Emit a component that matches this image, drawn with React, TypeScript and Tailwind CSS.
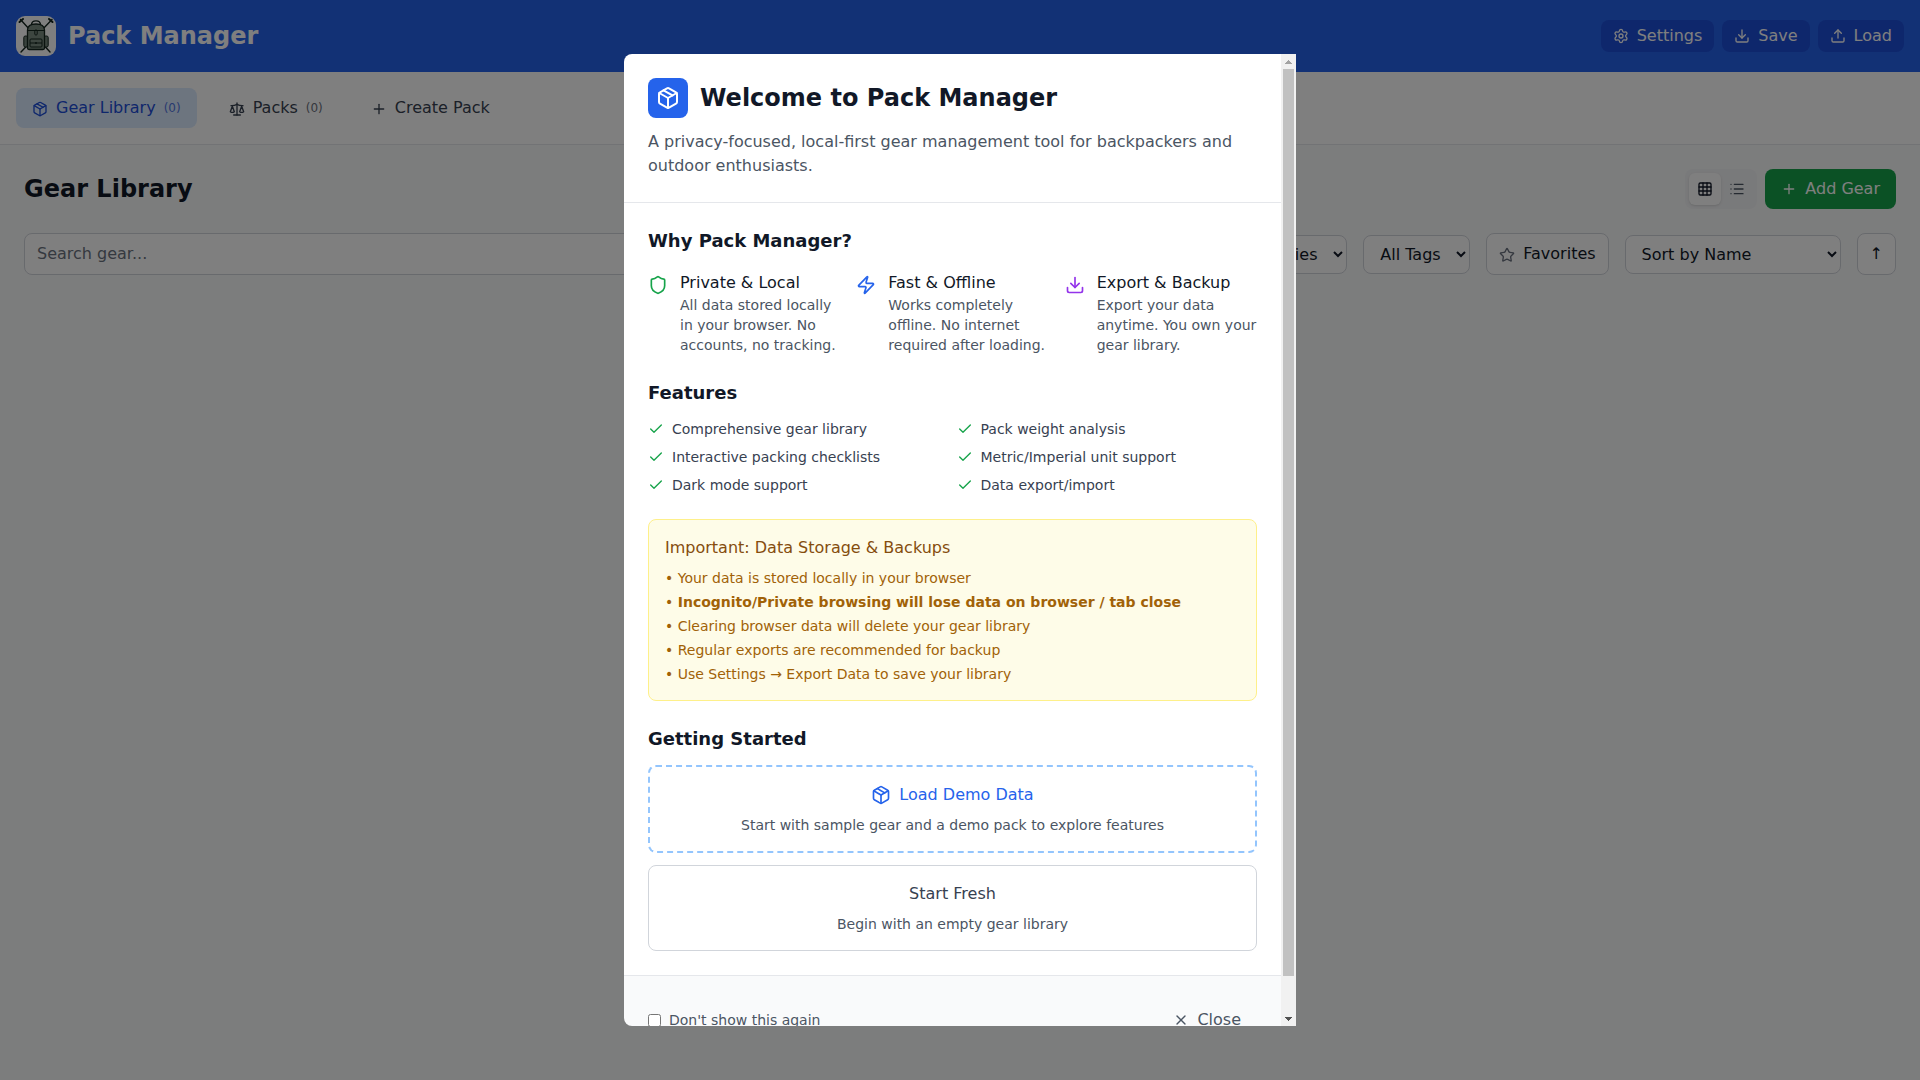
import React from 'react';
import {
  Check,
  Download,
  Grid3x3,
  List,
  Package,
  Plus,
  Scale,
  Settings,
  Shield,
  Star,
  Upload,
  X,
  Zap,
} from 'lucide-react';

const PackLogo = () => (
  <svg viewBox="0 0 40 40" className="h-10 w-10" fill="none">
    <rect width="40" height="40" rx="9" fill="#ffffff" />
    <g stroke="#14261f" strokeWidth="1.4" strokeLinecap="round">
      <path d="M4.5 3.5 34 36" />
      <path d="M36 3.5 5 36" />
      <path d="M3.5 6 7 3M33 3l3.5 3" strokeWidth="2" />
    </g>
    <path d="M15.5 9c0-5.5 9-5.5 9 0" stroke="#14261f" strokeWidth="1.4" />
    <rect x="7.8" y="20" width="4" height="11" rx="1.5" fill="#72857a" stroke="#14261f" />
    <rect x="28.2" y="20" width="4" height="11" rx="1.5" fill="#72857a" stroke="#14261f" />
    <path d="M11.5 14c0-4 3-6 8.500-6s8.500 2 8.500 6v18c0 1-.5 1.500-1.500 1.500H13c-1 0-1.500-.5-1.500-1.500z" fill="#7a8c80" stroke="#14261f" strokeWidth="1.3" />
    <path d="M11.500 14.500h17" stroke="#14261f" />
    <rect x="14" y="23" width="12" height="8" rx="1" stroke="#14261f" />
    <path d="M14 27h12" stroke="#14261f" />
    <circle cx="20" cy="27" r="1" fill="#14261f" />
    <rect x="18.800" y="14" width="2.400" height="5" rx="1" stroke="#14261f" />
  </svg>
);

const headerButtons = [
  { label: 'Settings', Icon: Settings },
  { label: 'Save', Icon: Download },
  { label: 'Load', Icon: Upload },
];

const reasons = [
  {
    title: 'Private & Local',
    text: 'All data stored locally in your browser. No accounts, no tracking.',
    Icon: Shield,
    color: 'text-[#16a34a]',
  },
  {
    title: 'Fast & Offline',
    text: 'Works completely offline. No internet required after loading.',
    Icon: Zap,
    color: 'text-[#2563eb]',
  },
  {
    title: 'Export & Backup',
    text: 'Export your data anytime. You own your gear library.',
    Icon: Download,
    color: 'text-[#9333ea]',
  },
];

const features = [
  'Comprehensive gear library',
  'Pack weight analysis',
  'Interactive packing checklists',
  'Metric/Imperial unit support',
  'Dark mode support',
  'Data export/import',
];

const selectClass = 'rounded-lg border border-[#d1d5db] bg-white px-3 py-2 text-base text-[#111827]';

// the page's browser hides native scrollbars, so the modal's one is drawn
const ModalScrollbar = () => (
  <div className="flex w-[15px] shrink-0 flex-col bg-[#f1f1f1]">
    <div className="flex h-[15px] items-center justify-center">
      <svg width="7" height="4" viewBox="0 0 7 4" shapeRendering="crispEdges">
        <path d="M3 0h1v1h1v1h1v1h1v1H0V3h1V2h1V1h1z" fill="#a3a3a3" />
      </svg>
    </div>
    <div className="mx-0.5 h-[907px] bg-[#c1c1c1]" />
    <div className="mt-auto flex h-[15px] items-center justify-center">
      <svg width="7" height="4" viewBox="0 0 7 4" shapeRendering="crispEdges">
        <path d="M0 0h7v1H6v1H5v1H4v1H3V3H2V2H1V1H0z" fill="#505050" />
      </svg>
    </div>
  </div>
);

export default function App() {
  return (
    <div className="min-h-screen bg-[#f9fafb] font-['DejaVu_Sans',sans-serif]">
      <header className="flex h-[72px] items-center justify-between bg-[#2563eb] px-4 text-white">
        <div className="flex items-center gap-3">
          <PackLogo />
          <h1 className="text-2xl font-bold">Pack Manager</h1>
        </div>
        <div className="flex items-center gap-2">
          {headerButtons.map(({ label, Icon }) => (
            <button key={label} className="flex items-center gap-2 rounded-lg bg-[#1d4ed8] px-3 py-1">
              <Icon size={16} />
              {label}
            </button>
          ))}
        </div>
      </header>

      <nav className="flex gap-4 border-b border-[#e5e7eb] bg-white p-4">
        <button className="flex items-center gap-2 rounded-lg bg-[#dbeafe] px-4 py-2 text-[#1d4ed8]">
          <Package size={16} className="mt-0.5" />
          <span>Gear Library</span>
          <span className="text-xs opacity-75">(0)</span>
        </button>
        <button className="flex items-center gap-2 rounded-lg px-4 py-2 text-[#374151]">
          <Scale size={16} className="mt-0.5" />
          <span>Packs</span>
          <span className="text-xs opacity-75">(0)</span>
        </button>
        <button className="flex items-center gap-2 rounded-lg px-4 py-2 text-[#374151]">
          <Plus size={16} className="mt-0.5" />
          <span>Create Pack</span>
        </button>
      </nav>

      <main className="p-6">
        <div className="mb-6 flex items-center justify-between">
          <h2 className="text-2xl font-bold text-[#111827]">Gear Library</h2>
          <div className="flex items-center gap-2">
            <div className="flex rounded-lg bg-[#f3f4f6] p-1">
              <button className="rounded-md bg-white p-2 text-[#111827] shadow-sm">
                <Grid3x3 size={16} />
              </button>
              <button className="rounded-md p-2 text-[#4b5563]">
                <List size={16} />
              </button>
            </div>
            <button className="flex items-center gap-2 rounded-lg bg-[#16a34a] px-4 py-2 text-white">
              <Plus size={16} />
              Add Gear
            </button>
          </div>
        </div>
        <div className="flex items-center gap-4">
          <input
            placeholder="Search gear..."
            className="min-w-0 flex-1 rounded-lg border border-[#d1d5db] bg-white px-3 py-2 text-base text-[#111827] placeholder:text-[#6b7280]"
          />
          <select className={selectClass} defaultValue="All Categories">
            <option>All Categories</option>
          </select>
          <select className={selectClass} defaultValue="All Tags">
            <option>All Tags</option>
          </select>
          <button className="flex items-center gap-2 rounded-lg border border-[#d1d5db] bg-white px-3 py-2 text-[#111827]">
            <Star size={16} className="mt-0.5 text-[#6b7280]" />
            Favorites
          </button>
          <select className={selectClass} defaultValue="Sort by Name">
            <option>Sort by Name</option>
            <option>Sort by Weight</option>
            <option>Sort by Manufacturer</option>
          </select>
          <button className="rounded-lg border border-[#d1d5db] bg-white px-3 py-2 text-[#111827]">↑</button>
        </div>
      </main>

      {/* Welcome modal */}
      <div className="fixed inset-0 z-50 flex items-center justify-center bg-black/50 p-4">
        <div className="flex max-h-[90vh] w-full max-w-2xl">
          <div className="min-w-0 flex-1 overflow-y-auto rounded-l-lg bg-white">
            <div className="border-b border-[#e5e7eb] p-6">
              <div className="mb-3 flex items-center gap-3">
                <div className="flex h-10 w-10 items-center justify-center rounded-lg bg-[#2563eb] text-white">
                  <Package size={24} />
                </div>
                <h2 className="text-2xl font-bold text-[#111827]">Welcome to Pack Manager</h2>
              </div>
              <p className="text-[#4b5563]">
                A privacy-focused, local-first gear management tool for backpackers and outdoor enthusiasts.
              </p>
            </div>

            <div className="p-6">
              <h3 className="mb-4 text-lg font-semibold text-[#111827]">Why Pack Manager?</h3>
              <div className="mb-6 grid grid-cols-3 gap-4">
                {reasons.map(({ title, text, Icon, color }) => (
                  <div key={title} className="flex items-start gap-3">
                    <Icon size={20} className={`mt-1 shrink-0 ${color}`} />
                    <div>
                      <div className="text-[#111827]">{title}</div>
                      <p className="text-sm text-[#4b5563]">{text}</p>
                    </div>
                  </div>
                ))}
              </div>

              <h3 className="mb-3 text-lg font-semibold text-[#111827]">Features</h3>
              <div className="mb-6 grid grid-cols-2 gap-2">
                {features.map((feature) => (
                  <div key={feature} className="flex items-center gap-2 text-sm text-[#374151]">
                    <Check size={16} className="shrink-0 text-[#16a34a]" />
                    {feature}
                  </div>
                ))}
              </div>

              <div className="mb-6 rounded-lg border border-[#fef08a] bg-[#fefce8] p-4">
                <h4 className="mb-2 text-[#854d0e]">Important: Data Storage &amp; Backups</h4>
                <ul className="space-y-1 text-sm text-[#a16207]">
                  <li>• Your data is stored locally in your browser</li>
                  <li>
                    • <strong className="font-semibold">Incognito/Private browsing will lose data on browser / tab close</strong>
                  </li>
                  <li>• Clearing browser data will delete your gear library</li>
                  <li>• Regular exports are recommended for backup</li>
                  <li>• Use Settings → Export Data to save your library</li>
                </ul>
              </div>

              <h3 className="mb-3 text-lg font-semibold text-[#111827]">Getting Started</h3>
              <div className="space-y-3">
                <button className="block w-full rounded-lg border-2 border-dashed border-[#93c5fd] p-4 text-center">
                  <span className="mb-2 flex items-center justify-center gap-2 text-[#2563eb]">
                    <Package size={20} />
                    Load Demo Data
                  </span>
                  <span className="block text-sm text-[#4b5563]">Start with sample gear and a demo pack to explore features</span>
                </button>
                <button className="block w-full rounded-lg border border-[#d1d5db] p-4 text-center">
                  <span className="mb-2 block text-[#374151]">Start Fresh</span>
                  <span className="block text-sm text-[#4b5563]">Begin with an empty gear library</span>
                </button>
              </div>
            </div>

            <div className="flex items-center justify-between border-t border-[#e5e7eb] bg-[#f9fafb] p-6">
              <label className="flex items-center gap-2 text-sm text-[#4b5563]">
                <input type="checkbox" />
                Don't show this again
              </label>
              <button className="flex items-center gap-2 rounded-lg px-4 py-2 text-[#4b5563]">
                <X size={16} />
                Close
              </button>
            </div>
          </div>
          <ModalScrollbar />
        </div>
      </div>
    </div>
  );
}
